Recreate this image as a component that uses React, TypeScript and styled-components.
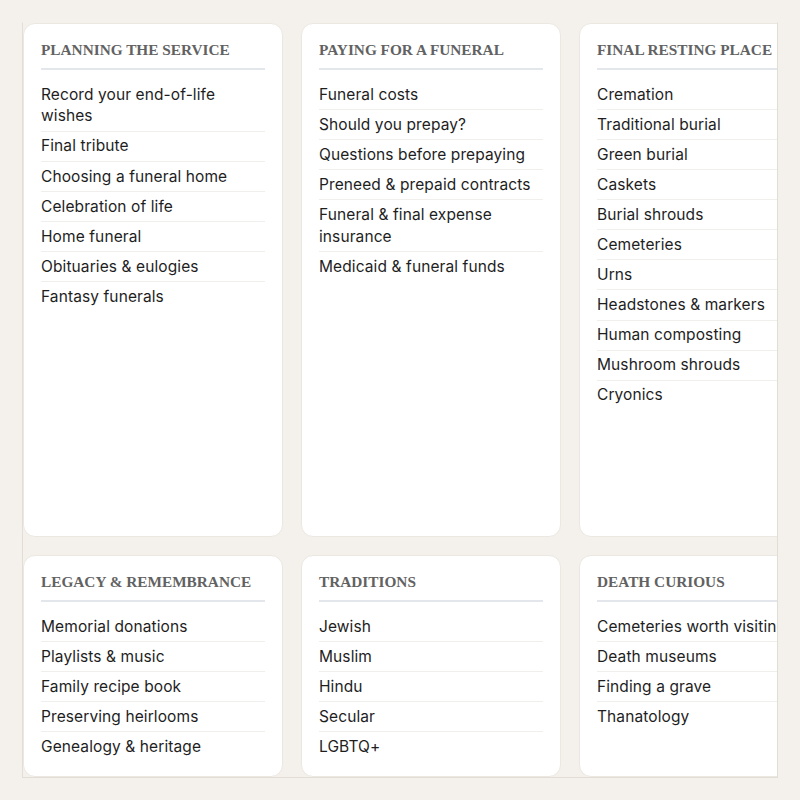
import React from "react";
import styled, { createGlobalStyle } from "styled-components";

const Global = createGlobalStyle`
  html, body { margin: 0; padding: 0; background: #f4f1ec; }
  * { box-sizing: border-box; }
`;

const Page = styled.div`
  padding: 22px;
  width: 800px;
  height: 800px;
`;

const Frame = styled.div`
  width: 756px;
  height: 756px;
  border: 1px solid #e2ddd5;
  border-top-color: transparent;
  overflow: hidden;
`;

const Grid = styled.div`
  display: grid;
  grid-template-columns: repeat(3, 260px);
  grid-template-rows: 514px auto;
  gap: 18px;
  width: max-content;
`;

const Card = styled.section`
  background: #ffffff;
  border: 1px solid #ebe7e1;
  border-radius: 12px;
  padding: 16px 17px 14px 17px;
`;

const Heading = styled.h2`
  margin: 0;
  padding-bottom: 8px;
  border-bottom: 2px solid #e3e6eb;
  font-family: "Liberation Serif", "DejaVu Serif", serif;
  font-weight: 700;
  font-size: 15.3px;
  line-height: 20px;
  letter-spacing: 0;
  color: #626262;
  white-space: nowrap;
  text-transform: uppercase;
`;

const List = styled.ul`
  list-style: none;
  margin: 10px 0 0;
  padding: 0;
`;

const Item = styled.li`
  padding: 3.7px 0;
  border-bottom: 1px solid #f1efec;
  font-family: "Inter", "Lato", sans-serif;
  font-size: 15.5px;
  line-height: 1.4;
  letter-spacing: 0.1px;
  color: #1e1e1e;
  white-space: normal;
  &:last-child { border-bottom-color: transparent; }
`;

type Section = { title: string; items: string[] };

const sections: Section[] = [
  {
    title: "Planning the service",
    items: [
      "Record your end-of-life wishes",
      "Final tribute",
      "Choosing a funeral home",
      "Celebration of life",
      "Home funeral",
      "Obituaries & eulogies",
      "Fantasy funerals",
    ],
  },
  {
    title: "Paying for a funeral",
    items: [
      "Funeral costs",
      "Should you prepay?",
      "Questions before prepaying",
      "Preneed & prepaid contracts",
      "Funeral & final expense insurance",
      "Medicaid & funeral funds",
    ],
  },
  {
    title: "Final resting place",
    items: [
      "Cremation",
      "Traditional burial",
      "Green burial",
      "Caskets",
      "Burial shrouds",
      "Cemeteries",
      "Urns",
      "Headstones & markers",
      "Human composting",
      "Mushroom shrouds",
      "Cryonics",
    ],
  },
  {
    title: "Legacy & remembrance",
    items: [
      "Memorial donations",
      "Playlists & music",
      "Family recipe book",
      "Preserving heirlooms",
      "Genealogy & heritage",
    ],
  },
  {
    title: "Traditions",
    items: ["Jewish", "Muslim", "Hindu", "Secular", "LGBTQ+"],
  },
  {
    title: "Death curious",
    items: [
      "Cemeteries worth visiting",
      "Death museums",
      "Finding a grave",
      "Thanatology",
    ],
  },
];

export default function App() {
  return (
    <Page>
      <Global />
      <Frame>
        <Grid>
          {sections.map((s) => (
            <Card key={s.title}>
              <Heading>{s.title}</Heading>
              <List>
                {s.items.map((it) => (
                  <Item key={it}>{it}</Item>
                ))}
              </List>
            </Card>
          ))}
        </Grid>
      </Frame>
    </Page>
  );
}
